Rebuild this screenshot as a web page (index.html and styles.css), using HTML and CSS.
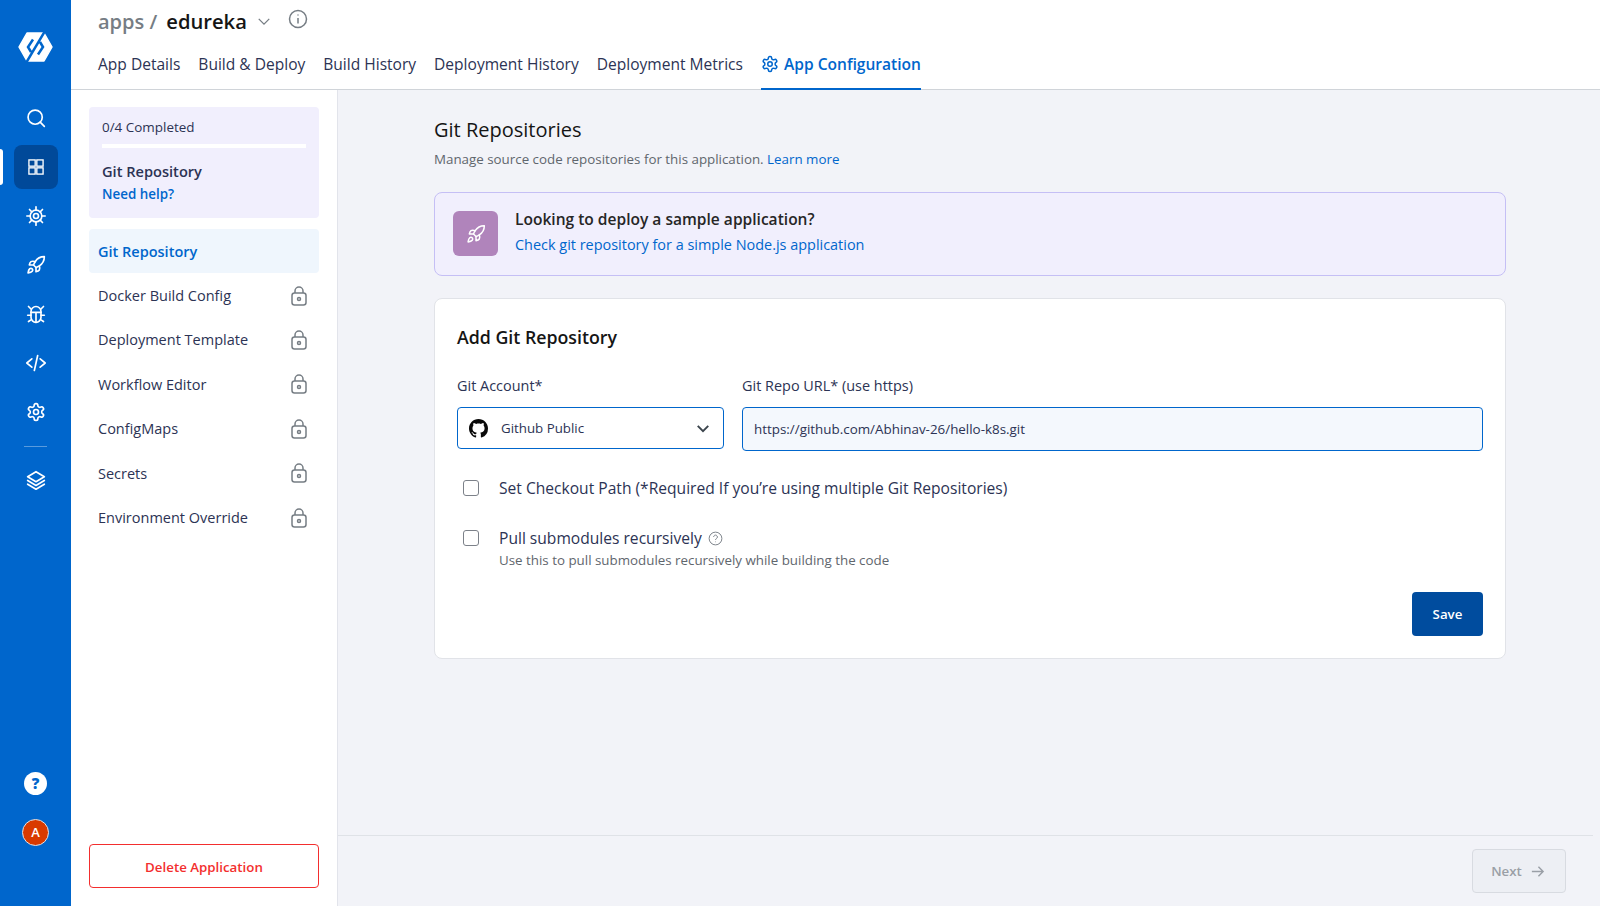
FILE: index.html
```html
<!DOCTYPE html>
<html lang="en">
<head>
<meta charset="utf-8">
<title>edureka - App Configuration</title>
<link rel="stylesheet" href="styles.css">
</head>
<body>
<div class="app">
  <nav class="rail">
    <div class="logo">
      <svg viewBox="0 0 35 30" width="35" height="30"><path class="logo-hex" d="M9 1h17l8 14-8 14H9L1 15z"/><path class="logo-cut" d="M27 -1L8 31M15 7.500L10 15l3 5M20 22.500L25 15l-3-5"/></svg>
    </div>
    <div class="rail-icon"><svg viewBox="0 0 24 24"><circle cx="11" cy="11" r="8.500"/><path d="M17 17l5 5"/></svg></div>
    <div class="rail-row">
      <span class="rail-mark"></span>
      <div class="rail-icon active"><svg viewBox="0 0 24 24"><rect x="3.500" y="3.500" width="7.500" height="7.500"/><rect x="13" y="3.500" width="7.500" height="7.500"/><rect x="3.500" y="13" width="7.500" height="7.500"/><rect x="13" y="13" width="7.500" height="7.500"/></svg></div>
    </div>
    <div class="rail-icon"><svg viewBox="0 0 24 24"><circle cx="12" cy="12" r="7"/><circle cx="12" cy="12" r="3"/><path d="M12 1v4M12 19v4M1 12h4M19 12h4M4.200 4.200l2.800 2.800M17 17l2.800 2.800M4.200 19.800L7 17M17 7l2.800-2.800"/></svg></div>
    <div class="rail-icon"><svg viewBox="0 0 24 24"><path d="M4.500 16.500c-1.500 1.260-2 5-2 5s3.740-.5 5-2c.71-.84.7-2.130-.09-2.910a2.180 2.180 0 0 0-2.910-.09z"/><path d="M12 15l-3-3a22 22 0 0 1 2-3.950A12.880 12.880 0 0 1 22 2c0 2.720-.78 7.500-6 11a22.350 22.350 0 0 1-4 2z"/><path d="M9 12H4s.55-3.030 2-4c1.620-1.080 5 0 5 0M12 15v5s3.030-.55 4-2c1.080-1.620 0-5 0-5"/></svg></div>
    <div class="rail-icon"><svg viewBox="0 0 24 24"><path d="M6 9a6 6 0 0 1 12 0v7a6 6 0 0 1-12 0z"/><path d="M6 10h12M12 10v12M2 13.500h4M18 13.500h4M3 3l3 3M21 3l-3 3M3 21l3-2M21 21l-3-2"/></svg></div>
    <div class="rail-icon"><svg viewBox="0 0 24 24"><path d="M7 7l-6 5 6 5M17 7l6 5-6 5M14 3l-4 18"/></svg></div>
    <div class="rail-icon"><svg viewBox="0 0 24 24"><path d="M12.220 2h-.44a2 2 0 0 0-2 2v.18a2 2 0 0 1-1 1.730l-.43.25a2 2 0 0 1-2 0l-.15-.08a2 2 0 0 0-2.730.73l-.22.38a2 2 0 0 0 .73 2.730l.15.1a2 2 0 0 1 1 1.720v.51a2 2 0 0 1-1 1.740l-.15.09a2 2 0 0 0-.73 2.730l.22.38a2 2 0 0 0 2.730.73l.15-.08a2 2 0 0 1 2 0l.43.25a2 2 0 0 1 1 1.730V20a2 2 0 0 0 2 2h.44a2 2 0 0 0 2-2v-.18a2 2 0 0 1 1-1.730l.43-.25a2 2 0 0 1 2 0l.15.08a2 2 0 0 0 2.730-.73l.22-.39a2 2 0 0 0-.73-2.730l-.15-.08a2 2 0 0 1-1-1.740v-.5a2 2 0 0 1 1-1.740l.15-.09a2 2 0 0 0 .73-2.730l-.22-.38a2 2 0 0 0-2.730-.73l-.15.08a2 2 0 0 1-2 0l-.43-.25a2 2 0 0 1-1-1.730V4a2 2 0 0 0-2-2z"/><circle cx="12" cy="12" r="3"/></svg></div>
    <div class="rail-sep"></div>
    <div class="rail-icon"><svg viewBox="0 0 24 24"><path d="M12 2L2 8l10 6 10-6zM2 12.500l10 6 10-6M2 17l10 6 10-6"/></svg></div>
    <div class="rail-bottom">
      <div class="help">?</div>
      <div class="avatar">A</div>
    </div>
  </nav>

  <div class="page">
    <header class="header">
      <div class="crumbs">
        <span class="crumb-root">apps /</span>
        <span class="crumb-app">edureka</span>
        <svg class="crumb-chevron" viewBox="0 0 16 10"><path d="M2 2l6 6 6-6"/></svg>
        <svg class="crumb-info" viewBox="0 0 20 20"><circle cx="10" cy="10" r="8.500"/><path d="M10 9v5.500M10 5.500v1"/></svg>
      </div>
      <div class="tabs">
        <span class="tab">App Details</span>
        <span class="tab">Build &amp; Deploy</span>
        <span class="tab">Build History</span>
        <span class="tab">Deployment History</span>
        <span class="tab">Deployment Metrics</span>
        <span class="tab tab-active">
          <svg viewBox="0 0 24 24"><path d="M12.220 2h-.44a2 2 0 0 0-2 2v.18a2 2 0 0 1-1 1.730l-.43.25a2 2 0 0 1-2 0l-.15-.08a2 2 0 0 0-2.730.73l-.22.38a2 2 0 0 0 .73 2.730l.15.1a2 2 0 0 1 1 1.720v.51a2 2 0 0 1-1 1.740l-.15.09a2 2 0 0 0-.73 2.730l.22.38a2 2 0 0 0 2.730.73l.15-.08a2 2 0 0 1 2 0l.43.25a2 2 0 0 1 1 1.730V20a2 2 0 0 0 2 2h.44a2 2 0 0 0 2-2v-.18a2 2 0 0 1 1-1.730l.43-.25a2 2 0 0 1 2 0l.15.08a2 2 0 0 0 2.730-.73l.22-.39a2 2 0 0 0-.73-2.730l-.15-.08a2 2 0 0 1-1-1.740v-.5a2 2 0 0 1 1-1.740l.15-.09a2 2 0 0 0 .73-2.730l-.22-.38a2 2 0 0 0-2.730-.73l-.15.08a2 2 0 0 1-2 0l-.43-.25a2 2 0 0 1-1-1.730V4a2 2 0 0 0-2-2z"/><circle cx="12" cy="12" r="3"/></svg>
          App Configuration
        </span>
      </div>
    </header>

    <div class="body">
      <aside class="side">
        <div class="progress">
          <div class="progress-label">0/4 Completed</div>
          <div class="progress-bar"></div>
          <div class="progress-title">Git Repository</div>
          <div class="progress-help">Need help?</div>
        </div>
        <div class="step step-active">Git Repository</div>
        <div class="step">Docker Build Config<svg class="lock" viewBox="0 0 16 20"><rect x="1" y="7" width="14" height="12" rx="2.500"/><path d="M4 7V5a4 4 0 0 1 8 0v2"/><circle cx="8" cy="13" r="1.500"/></svg></div>
        <div class="step">Deployment Template<svg class="lock" viewBox="0 0 16 20"><rect x="1" y="7" width="14" height="12" rx="2.500"/><path d="M4 7V5a4 4 0 0 1 8 0v2"/><circle cx="8" cy="13" r="1.500"/></svg></div>
        <div class="step">Workflow Editor<svg class="lock" viewBox="0 0 16 20"><rect x="1" y="7" width="14" height="12" rx="2.500"/><path d="M4 7V5a4 4 0 0 1 8 0v2"/><circle cx="8" cy="13" r="1.500"/></svg></div>
        <div class="step">ConfigMaps<svg class="lock" viewBox="0 0 16 20"><rect x="1" y="7" width="14" height="12" rx="2.500"/><path d="M4 7V5a4 4 0 0 1 8 0v2"/><circle cx="8" cy="13" r="1.500"/></svg></div>
        <div class="step">Secrets<svg class="lock" viewBox="0 0 16 20"><rect x="1" y="7" width="14" height="12" rx="2.500"/><path d="M4 7V5a4 4 0 0 1 8 0v2"/><circle cx="8" cy="13" r="1.500"/></svg></div>
        <div class="step">Environment Override<svg class="lock" viewBox="0 0 16 20"><rect x="1" y="7" width="14" height="12" rx="2.500"/><path d="M4 7V5a4 4 0 0 1 8 0v2"/><circle cx="8" cy="13" r="1.500"/></svg></div>
        <div class="delete">Delete Application</div>
      </aside>

      <main class="main">
        <div class="content">
          <h1 class="title">Git Repositories</h1>
          <p class="subtitle">Manage source code repositories for this application. <span class="link">Learn more</span></p>

          <div class="banner">
            <div class="banner-icon"><svg viewBox="0 0 24 24"><path d="M4.500 16.500c-1.500 1.260-2 5-2 5s3.740-.5 5-2c.71-.84.7-2.130-.09-2.910a2.180 2.180 0 0 0-2.910-.09z"/><path d="M12 15l-3-3a22 22 0 0 1 2-3.950A12.880 12.880 0 0 1 22 2c0 2.720-.78 7.500-6 11a22.350 22.350 0 0 1-4 2z"/><path d="M9 12H4s.55-3.030 2-4c1.620-1.080 5 0 5 0M12 15v5s3.030-.55 4-2c1.080-1.620 0-5 0-5"/></svg></div>
            <div>
              <div class="banner-title">Looking to deploy a sample application?</div>
              <div class="banner-link">Check git repository for a simple Node.js application</div>
            </div>
          </div>

          <section class="card">
            <h2 class="card-title">Add Git Repository</h2>
            <div class="fields">
              <div class="field field-account">
                <label class="field-label">Git Account*</label>
                <div class="select">
                  <svg class="gh" viewBox="0 0 16 16"><path fill="#0a0a0a" d="M8 0C3.580 0 0 3.580 0 8c0 3.540 2.290 6.530 5.470 7.590.4.070.55-.170.55-.380 0-.190-.010-.820-.010-1.490-2.010.370-2.530-.490-2.690-.940-.090-.230-.480-.940-.820-1.130-.280-.150-.680-.520-.010-.530.630-.010 1.080.580 1.230.820.720 1.210 1.870.870 2.330.660.070-.520.280-.870.510-1.070-1.780-.200-3.640-.890-3.640-3.950 0-.870.310-1.590.820-2.150-.080-.200-.360-1.020.080-2.120 0 0 .670-.210 2.200.820.640-.180 1.320-.270 2-.270s1.360.090 2 .270c1.530-1.040 2.200-.820 2.200-.820.440 1.100.160 1.920.080 2.120.510.560.820 1.270.820 2.150 0 3.070-1.870 3.750-3.650 3.950.290.250.540.730.540 1.480 0 1.070-.010 1.930-.010 2.200 0 .210.150.460.550.380A8.010 8.010 0 0 0 16 8c0-4.420-3.580-8-8-8z"/></svg>
                  <span class="select-value">Github Public</span>
                  <svg class="select-chevron" viewBox="0 0 16 10"><path d="M2 2l6 6 6-6"/></svg>
                </div>
              </div>
              <div class="field field-url">
                <label class="field-label">Git Repo URL* (use https)</label>
                <div class="input">https://github.com/Abhinav-26/hello-k8s.git</div>
              </div>
            </div>
            <div class="check check-first">
              <span class="box"></span>
              <span class="check-label">Set Checkout Path (*Required If you’re using multiple Git Repositories)</span>
            </div>
            <div class="check check-second">
              <span class="box"></span>
              <div>
                <div class="check-label">Pull submodules recursively
                  <svg class="q" viewBox="0 0 16 16"><circle cx="8" cy="8" r="6.800"/><path d="M6 6.300a2 2 0 1 1 3 1.800c-.7.400-1 .8-1 1.500M8 11.300v.6"/></svg>
                </div>
                <div class="check-hint">Use this to pull submodules recursively while building the code</div>
              </div>
            </div>
            <div class="card-actions"><span class="save">Save</span></div>
          </section>
        </div>
        <footer class="footer">
          <span class="next">Next<svg viewBox="0 0 16 16"><path d="M2 8h12M9 3l5 5-5 5"/></svg></span>
        </footer>
      </main>
    </div>
  </div>
</div>
</body>
</html>
```
FILE: styles.css
```css
* { box-sizing: border-box; }
html, body { margin: 0; height: 100%; }
body { font-family: "Open Sans", "Noto Sans", sans-serif; color: #151515; overflow: hidden; background: #fff; }
.app { display: flex; height: 906px; }

.rail { width: 71px; flex: none; background: #0066cc; display: flex; flex-direction: column; align-items: center; padding-top: 32px; }
.rail svg { fill: none; stroke: #fff; stroke-width: 2; stroke-linecap: round; stroke-linejoin: round; }
.logo { height: 30px; margin-bottom: 34px; }
.logo svg { display: block; }
.rail .logo-hex { fill: #fff; stroke: #fff; stroke-width: 1.500; }
.rail .logo-cut { stroke: #0066cc; stroke-width: 2.500; stroke-linecap: butt; stroke-linejoin: miter; }
.rail-icon { width: 44px; height: 44px; margin-bottom: 5px; display: flex; align-items: center; justify-content: center; border-radius: 8px; flex: none; }
.rail-icon svg { width: 20px; height: 20px; }
.rail-icon.active { background: #004999; }
.rail .rail-icon.active svg { stroke-width: 1.600; stroke-linejoin: miter; }
.rail-row { width: 71px; display: flex; justify-content: center; position: relative; }
.rail-mark { position: absolute; left: 0; top: 4px; width: 3px; height: 36px; background: #fff; border-radius: 0 3px 3px 0; }
.rail-sep { width: 23px; height: 1px; background: rgba(255,255,255,.35); margin: 7px 0 11px; }
.rail-bottom { margin-top: auto; padding-bottom: 60px; display: flex; flex-direction: column; align-items: center; gap: 24px; }
.help { width: 23px; height: 23px; border-radius: 50%; background: #fff; color: #0066cc; font-weight: 800; font-size: 15px; line-height: 23px; text-align: center; }
.avatar { width: 27px; height: 27px; border-radius: 50%; background: #d93a00; border: 1px solid #dfe3e8; color: #fff; font-size: 13px; font-weight: 600; line-height: 25px; text-align: center; }

.page { flex: 1; display: flex; flex-direction: column; min-width: 0; }
.header { height: 90px; flex: none; border-bottom: 1px solid #d0d4d9; padding: 0 0 0 27px; background: #fff; }
.crumbs { display: flex; align-items: center; height: 42px; }
.crumb-root { font-size: 20px; font-weight: 600; color: #767d84; margin-right: 9px; }
.crumb-app { font-size: 20.200px; font-weight: 600; color: #151515; margin-right: 10px; }
.crumb-chevron { width: 14px; height: 9px; fill: none; stroke: #767d84; stroke-width: 1.500; margin-right: 17px; }
.crumb-info { width: 20px; height: 20px; fill: none; stroke: #767d84; stroke-width: 1.500; margin-top: -4px; }
.tabs { display: flex; gap: 18px; height: 48px; }
.tab { font-size: 15.550px; line-height: 45px; color: #2c3354; height: 48px; white-space: nowrap; }
.tab-active { color: #0066cc; font-weight: 600; border-bottom: 2px solid #0066cc; display: flex; align-items: flex-start; gap: 5px; }
.tab-active svg { width: 18px; height: 18px; fill: none; stroke: #0066cc; stroke-width: 2; margin-top: 13px; stroke-linecap: round; stroke-linejoin: round; }

.body { flex: 1; display: flex; min-height: 0; }
.side { width: 267px; flex: none; background: #fff; border-right: 1px solid #e2e4eb; padding: 17px 18px 18px; display: flex; flex-direction: column; }
.progress { background: #f1effd; border-radius: 4px; height: 111px; padding: 11px 13px; margin-bottom: 11px; }
.progress-label { font-size: 13.450px; line-height: 18px; color: #2c3354; }
.progress-bar { height: 4px; background: #fff; margin: 8px 0 13px; }
.progress-title { font-size: 14.600px; font-weight: 600; line-height: 20px; color: #2c3354; margin-bottom: 3px; }
.progress-help { font-size: 13.400px; font-weight: 600; line-height: 20px; color: #0066cc; }
.step { height: 44.400px; flex: none; display: flex; align-items: center; justify-content: space-between; padding: 0 12px 0 9px; font-size: 14.500px; color: #2c3354; border-radius: 4px; }
.step-active { background: #eff6fd; color: #0066cc; font-weight: 600; }
.lock { width: 16px; height: 20px; fill: none; stroke: #767d84; stroke-width: 1.500; }
.delete { margin-top: auto; height: 44px; padding-top: 1px; border: 1px solid #f32e2e; border-radius: 4px; color: #f32e2e; font-size: 13.300px; font-weight: 600; display: flex; align-items: center; justify-content: center; flex: none; }

.main { flex: 1; background: #f2f3f8; display: flex; flex-direction: column; min-width: 0; padding-right: 7px; }
.content { flex: 1; padding: 26px 0 0 96px; width: 1168px; }
.title { margin: 0; font-size: 20px; font-weight: 400; line-height: 27px; color: #151515; }
.subtitle { margin: 6px 0 0; font-size: 13.350px; line-height: 20px; color: #5f666d; }
.link { color: #0066cc; }
.banner { margin-top: 23px; height: 84px; background: #f1effd; border: 1px solid #c5bff5; border-radius: 8px; padding: 0 18px; display: flex; align-items: center; gap: 17px; }
.banner-icon { width: 45px; height: 45px; margin-top: -1px; border-radius: 6px; background: #b084bb; display: flex; align-items: center; justify-content: center; flex: none; }
.banner-icon svg { width: 20px; height: 20px; fill: none; stroke: #fff; stroke-width: 1.800; stroke-linejoin: round; stroke-linecap: round; }
.banner-title { font-size: 15.550px; font-weight: 600; line-height: 22px; color: #262626; margin: -5px 0 5px; }
.banner-link { font-size: 14.450px; line-height: 20px; color: #0066cc; }
.card { margin-top: 22px; height: 361px; background: #fff; border: 1px solid #e1e3e8; border-radius: 8px; padding: 26px 22px 0; }
.card-title { margin: 0; font-size: 17.750px; font-weight: 600; line-height: 25px; color: #151515; }
.fields { display: flex; gap: 18px; margin-top: 26px; }
.field-account { width: 267px; flex: none; }
.field-url { flex: 1; }
.field-label { display: block; font-size: 14.450px; line-height: 20px; color: #2c3354; margin-bottom: 11px; }
.select { height: 42px; border: 1px solid #0066cc; border-radius: 4px; background: #fff; display: flex; align-items: center; padding: 0 13px 0 11px; }
.gh { width: 19px; height: 19px; margin-right: 13px; flex: none; }
.select-value { flex: 1; font-size: 13.300px; color: #2c3354; margin-top: -1px; }
.select-chevron { width: 14px; height: 9px; fill: none; stroke: #3b444c; stroke-width: 2.200; }
.input { height: 44px; border: 1px solid #0066cc; border-radius: 4px; background: #f4f8fd; padding: 0 11px; font-size: 13.400px; line-height: 42px; color: #2c3354; }
.check { display: flex; align-items: flex-start; gap: 20px; padding-left: 6px; }
.check-first { margin-top: 26px; }
.check-second { margin-top: 28px; }
.box { width: 16px; height: 16px; margin-top: 3px; border: 1.500px solid #7c8189; border-radius: 3px; background: #fff; flex: none; }
.check-label { font-size: 15.600px; line-height: 22px; color: #2c3354; }
.q { width: 15px; height: 15px; fill: none; stroke: #767d84; stroke-width: 1; vertical-align: -2px; margin-left: 2px; }
.check-hint { font-size: 13.350px; line-height: 18px; color: #5f666d; margin-top: 2px; }
.card-actions { display: flex; justify-content: flex-end; margin-top: 23px; }
.save { width: 71px; height: 44px; background: #004c9e; border-radius: 4px; color: #fff; font-size: 13.300px; font-weight: 600; display: flex; align-items: center; justify-content: center; }
.footer { height: 71px; flex: none; border-top: 1px solid #dfe2e7; display: flex; justify-content: flex-end; align-items: flex-start; padding: 13px 0 0; }
.next { width: 94px; height: 44px; margin-right: 27px; padding-right: 2px; background: #edeff4; border: 1px solid #d8dbe1; border-radius: 4px; color: #9a9fa6; font-size: 13.300px; font-weight: 600; display: flex; align-items: center; justify-content: center; gap: 8px; }
.next svg { width: 15px; height: 15px; fill: none; stroke: #9a9fa6; stroke-width: 1.500; }
```
